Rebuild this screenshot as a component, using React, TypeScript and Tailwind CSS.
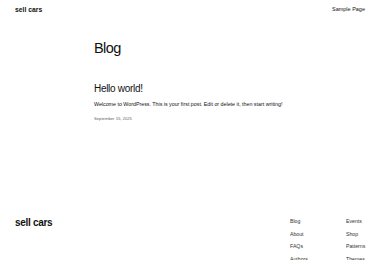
import React from 'react';

const footerCols = [
  ['Blog', 'About', 'FAQs', 'Authors'],
  ['Events', 'Shop', 'Patterns', 'Themes'],
];

export default function App() {
  return (
    <div className="w-[380px] h-[260px] overflow-hidden bg-white text-[#111] font-['Liberation_Sans',Arial,sans-serif]">
      <header className="flex items-center justify-between px-[15px] h-[20px]">
        <span className="text-[6.8px] font-bold leading-none">sell cars</span>
        <span className="text-[5.5px] leading-none">Sample Page</span>
      </header>

      <main className="pl-[94px]">
        <h1 className="mt-[21px] text-[14.5px] tracking-[-0.6px] leading-none">Blog</h1>
        <article className="mt-[28px]">
          <h2 className="text-[10px] tracking-[-0.3px] leading-none">Hello world!</h2>
          <p className="mt-[8px] text-[5.3px] leading-none">
            Welcome to WordPress. This is your first post. Edit or delete it, then start writing!
          </p>
          <p className="mt-[10px] text-[4.2px] leading-none text-[#666]">September 15, 2025</p>
        </article>
      </main>

      <footer className="mt-[97px] flex justify-between pl-[15px] pr-[13px]">
        <span className="text-[10px] tracking-[-0.3px] font-bold leading-none">sell cars</span>
        <div className="flex gap-[35px] pt-[1px]">
          {footerCols.map((col, i) => (
            <ul key={i} className="flex flex-col gap-[7.5px] w-[21px]">
              {col.map((l) => (
                <li key={l} className="text-[5.2px] leading-[5px] whitespace-nowrap text-[#333]">{l}</li>
              ))}
            </ul>
          ))}
        </div>
      </footer>
    </div>
  );
}
